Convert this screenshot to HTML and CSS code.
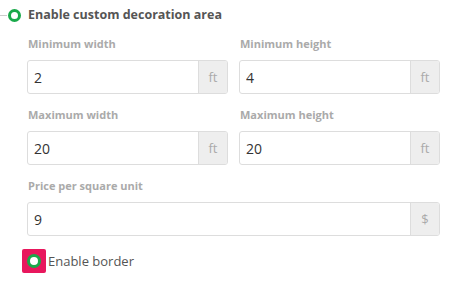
FILE: index.html
```html
<!DOCTYPE html>
<html lang="en">
<head>
    <meta charset="UTF-8">
    <title>Decoration area</title>
    <link rel="stylesheet" href="styles.css">
</head>
<body>

<div class="panel">
    <div class="toggle-head">
        <span class="branch"></span>
        <span class="ring"></span>
        <h3>Enable custom decoration area</h3>
    </div>

    <div class="fields">
        <div class="form-group">
            <label>Minimum width</label>
            <div class="input-group">
                <input type="text" value="2">
                <span class="addon">ft</span>
            </div>
        </div>
        <div class="form-group">
            <label>Minimum height</label>
            <div class="input-group">
                <input type="text" value="4">
                <span class="addon">ft</span>
            </div>
        </div>
        <div class="form-group">
            <label>Maximum width</label>
            <div class="input-group">
                <input type="text" value="20">
                <span class="addon">ft</span>
            </div>
        </div>
        <div class="form-group">
            <label>Maximum height</label>
            <div class="input-group">
                <input type="text" value="20">
                <span class="addon">ft</span>
            </div>
        </div>
        <div class="form-group wide">
            <label>Price per square unit</label>
            <div class="input-group">
                <input type="text" value="9">
                <span class="addon">$</span>
            </div>
        </div>
    </div>

    <div class="check-row">
        <span class="focus-box"><span class="ring small"></span></span>
        <span class="check-label">Enable border</span>
    </div>
</div>

</body>
</html>
```

FILE: styles.css
```css
* {
    margin: 0;
    padding: 0;
    box-sizing: border-box;
}
body {
    font-family: 'Open Sans', 'Liberation Sans', sans-serif;
    background-color: #fff;
    color: #555;
}
.panel {
    width: 440px;
    padding-top: 5px;
}
.toggle-head {
    display: flex;
    align-items: center;
    height: 20px;
}
.branch {
    width: 7px;
    height: 1px;
    background-color: #ccc;
}
.ring {
    width: 13px;
    height: 13px;
    border: 3px solid #19a94a;
    border-radius: 50%;
    margin-left: 1px;
}
.toggle-head h3 {
    font-size: 12.5px;
    font-weight: 700;
    color: #555;
    margin-left: 7px;
    line-height: 20px;
}
.fields {
    display: grid;
    grid-template-columns: minmax(0, 1fr) minmax(0, 1fr);
    column-gap: 11px;
    padding-left: 27px;
    margin-top: 11px;
}
.form-group {
    margin-bottom: 13px;
}
.form-group.wide {
    grid-column: 1 / 3;
}
.form-group label {
    display: block;
    font-size: 11px;
    font-weight: 700;
    line-height: 16px;
    color: #aaa;
    margin-bottom: 8px;
    padding-left: 1px;
}
.input-group {
    display: flex;
    height: 34px;
    border: 1px solid #ddd;
    border-radius: 3px;
}
.input-group input {
    flex: 1;
    width: 100%;
    min-width: 0;
    border: none;
    outline: none;
    padding: 0 6px;
    font-family: 'Open Sans', 'Liberation Sans', sans-serif;
    font-size: 14px;
    color: #333;
    background: transparent;
    border-radius: 3px 0 0 3px;
}
.addon {
    width: 29px;
    flex-shrink: 0;
    display: flex;
    align-items: center;
    justify-content: center;
    background-color: #eee;
    border-left: 1px solid #ddd;
    color: #aaa;
    font-size: 13px;
    border-radius: 0 2px 2px 0;
}
.check-row {
    display: flex;
    align-items: center;
    padding-left: 22px;
}
.focus-box {
    width: 24px;
    height: 24px;
    background-color: #e8175d;
    border-radius: 2px;
    display: flex;
    align-items: center;
    justify-content: center;
}
.ring.small {
    width: 14px;
    height: 14px;
    margin: 0;
    background-color: #fff;
}
.check-label {
    font-size: 13px;
    margin-left: 2px;
    color: #555;
}
```
